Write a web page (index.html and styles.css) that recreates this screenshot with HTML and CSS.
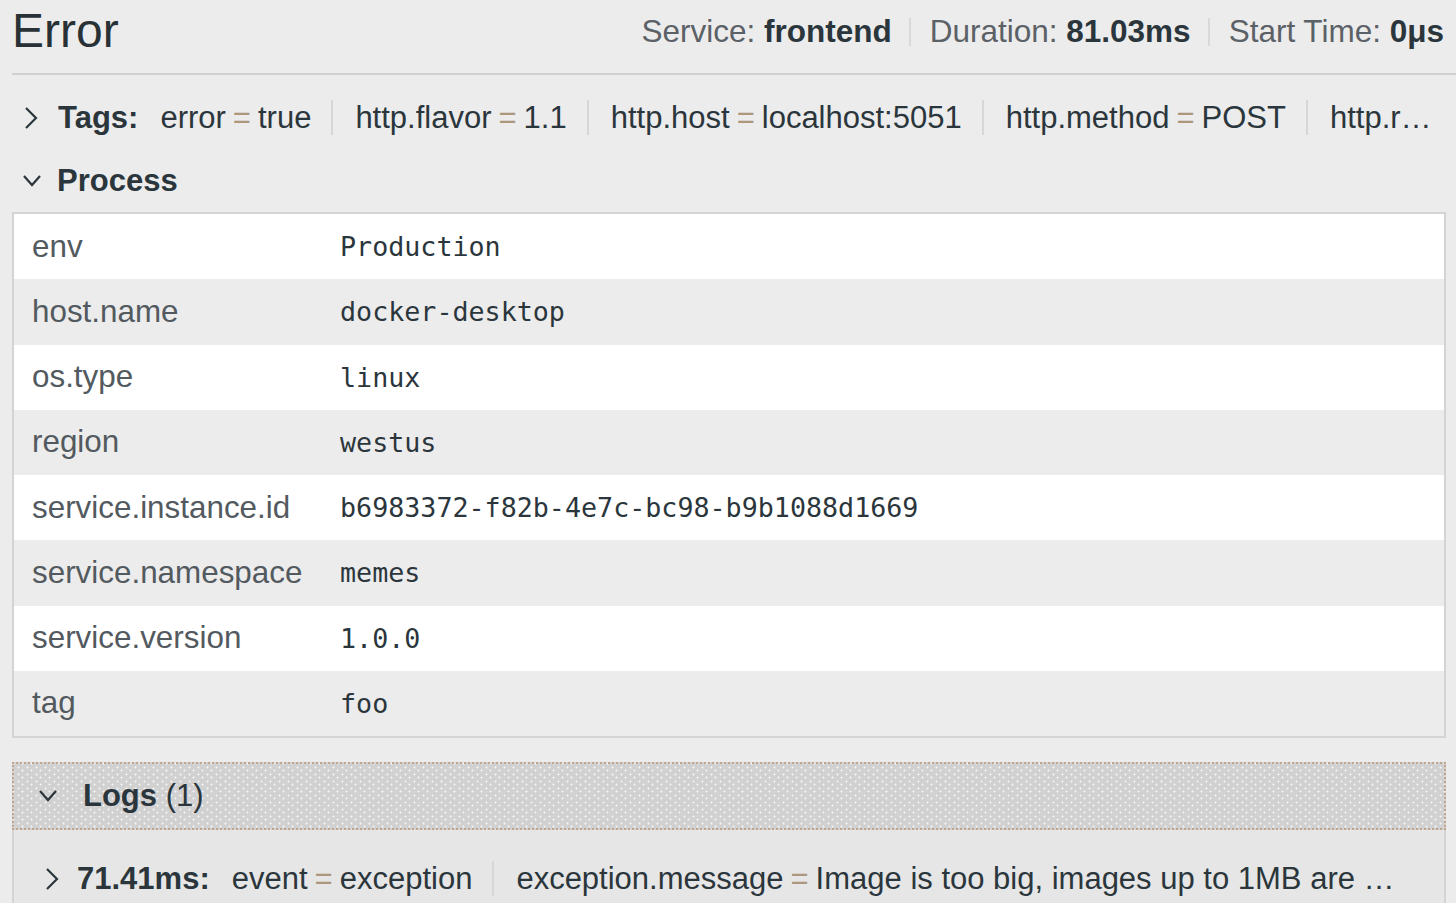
FILE: index.html
```html
<!DOCTYPE html>
<html lang="en">
<head>
<meta charset="utf-8">
<title>Span detail</title>
<link rel="stylesheet" href="styles.css">
</head>
<body>
<div class="page">
  <header class="span-header">
    <h1 class="title">Error</h1>
    <div class="meta">
      <span class="meta-item">Service: <strong>frontend</strong></span>
      <span class="meta-item">Duration: <strong>81.03ms</strong></span>
      <span class="meta-item">Start Time: <strong>0μs</strong></span>
    </div>
  </header>

  <section class="tags-row">
    <svg class="chev-right" width="14" height="24" viewBox="0 0 14 24"><polyline points="2,2 12,12 2,22" fill="none" stroke="#2b363c" stroke-width="2.2"/></svg>
    <div class="tags-line"><strong class="label">Tags:</strong><span class="kv first">error<span class="eq">=</span>true</span><span class="kv">http.flavor<span class="eq">=</span>1.1</span><span class="kv">http.host<span class="eq">=</span>localhost:5051</span><span class="kv">http.method<span class="eq">=</span>POST</span><span class="kv">http.route<span class="eq">=</span>/api/upload</span><span class="kv">http.scheme<span class="eq">=</span>http</span></div>
  </section>

  <section class="process">
    <div class="section-head">
      <svg class="chev-down" width="20" height="14" viewBox="0 0 20 14"><polyline points="2,2 10,11 18,2" fill="none" stroke="#2b363c" stroke-width="2.2"/></svg>
      <strong>Process</strong>
    </div>
    <div class="kv-table">
      <div class="kv-row"><span class="key">env</span><span class="val">Production</span></div>
      <div class="kv-row"><span class="key">host.name</span><span class="val">docker-desktop</span></div>
      <div class="kv-row"><span class="key">os.type</span><span class="val">linux</span></div>
      <div class="kv-row"><span class="key">region</span><span class="val">westus</span></div>
      <div class="kv-row"><span class="key">service.instance.id</span><span class="val">b6983372-f82b-4e7c-bc98-b9b1088d1669</span></div>
      <div class="kv-row"><span class="key">service.namespace</span><span class="val">memes</span></div>
      <div class="kv-row"><span class="key">service.version</span><span class="val">1.0.0</span></div>
      <div class="kv-row"><span class="key">tag</span><span class="val">foo</span></div>
    </div>
  </section>

  <section class="logs">
    <div class="logs-head">
      <svg class="chev-down" width="20" height="14" viewBox="0 0 20 14"><polyline points="2,2 10,11 18,2" fill="none" stroke="#2b363c" stroke-width="2.2"/></svg>
      <span class="logs-title"><strong>Logs</strong> (1)</span>
    </div>
    <div class="logs-body">
      <div class="log-row">
        <svg class="chev-right" width="14" height="24" viewBox="0 0 14 24"><polyline points="2,2 12,12 2,22" fill="none" stroke="#2b363c" stroke-width="2.2"/></svg>
        <div class="log-line"><strong class="label">71.41ms:</strong><span class="kv first">event<span class="eq">=</span>exception</span><span class="kv">exception.message<span class="eq">=</span>Image is too big, images up to 1MB are allowed</span></div>
      </div>
    </div>
  </section>
</div>
</body>
</html>
```

FILE: styles.css
```css
html, body {
  margin: 0;
  padding: 0;
}

body {
  background: #ececec;
  font-family: "Liberation Sans", Arial, sans-serif;
  color: #2b363c;
  overflow: hidden;
  height: 903px;
}

.page {
  padding: 0 10px 0 12px;
}

/* ---------- header ---------- */
.span-header {
  display: flex;
  justify-content: space-between;
  align-items: center;
  padding: 4px 12px 16px 0;
  margin-right: -10px;
  border-bottom: 2px solid #d0d0d0;
}

.title {
  margin: 0;
  font-size: 48px;
  font-weight: 400;
  line-height: 53px;
  color: #283236;
}

.meta {
  display: flex;
  align-items: center;
  font-size: 31.5px;
  color: #5b6166;
  margin-top: 2px;
}

.meta-item {
  display: flex;
  align-items: center;
  white-space: pre;
}

.meta-item strong {
  color: #2b363c;
  font-weight: 700;
}

.meta-item + .meta-item::before {
  content: "";
  display: block;
  width: 2px;
  height: 28px;
  background: #d9d9d9;
  margin: 0 19px 0 17px;
}

/* ---------- tags row ---------- */
.tags-row {
  display: flex;
  align-items: center;
  margin-top: 25px;
  padding-left: 12px;
  margin-right: 8px;
}

.chev-right {
  flex: none;
  display: block;
}

.chev-down {
  flex: none;
  display: block;
}

.tags-line,
.log-line {
  flex: 1;
  min-width: 0;
  overflow: hidden;
  white-space: nowrap;
  text-overflow: ellipsis;
  font-size: 31px;
  line-height: 36px;
  color: #2b363c;
}

.tags-line {
  margin-left: 20px;
}

.label {
  font-weight: 700;
}

.kv {
  padding: 0 20px 0 22px;
  border-left: 2px solid #d7d7d7;
}

.kv.first {
  border-left: none;
  padding-left: 22px;
}

.eq {
  color: #ad967e;
  padding: 0 7px;
}

/* ---------- process ---------- */
.section-head {
  display: flex;
  align-items: center;
  margin-top: 27px;
  padding-left: 10px;
  font-size: 31px;
  line-height: 36px;
}

.section-head strong {
  margin-left: 15px;
}

.kv-table {
  margin-top: 13px;
  border: 2px solid #d4d4d4;
}

.kv-row {
  display: grid;
  grid-template-columns: 326px 1fr;
  align-items: center;
  height: 65.25px;
  background: #ececec;
}

.kv-row:nth-child(odd) {
  background: #ffffff;
}

.key {
  padding-left: 18px;
  font-size: 31.4px;
  color: #535a5f;
}

.val {
  font-family: "DejaVu Sans Mono", "Liberation Mono", monospace;
  font-size: 26.7px;
  color: #2b363c;
}

/* ---------- logs ---------- */
.logs {
  margin-top: 24px;
}

.logs-head {
  display: flex;
  align-items: center;
  height: 64px;
  padding-left: 24px;
  border: 2px dotted #c1a68c;
  background-color: #d1d1d1;
  background-image:
    radial-gradient(circle, rgba(255, 255, 255, 0.8) 0.7px, transparent 1.3px),
    radial-gradient(circle, rgba(255, 255, 255, 0.8) 0.7px, transparent 1.3px);
  background-size: 9px 7px, 9px 7px;
  background-position: 0 0, 4px 3px;
}

.logs-title {
  margin-left: 25px;
  font-size: 31px;
  line-height: 36px;
  color: #2b363c;
}

.logs-body {
  background: #e6e6e6;
  border-left: 2px solid #d4d4d4;
  border-right: 2px solid #d4d4d4;
  padding: 31px 34px 40px 31px;
}

.log-row {
  display: flex;
  align-items: center;
}

.log-line {
  margin-left: 18px;
}
```
